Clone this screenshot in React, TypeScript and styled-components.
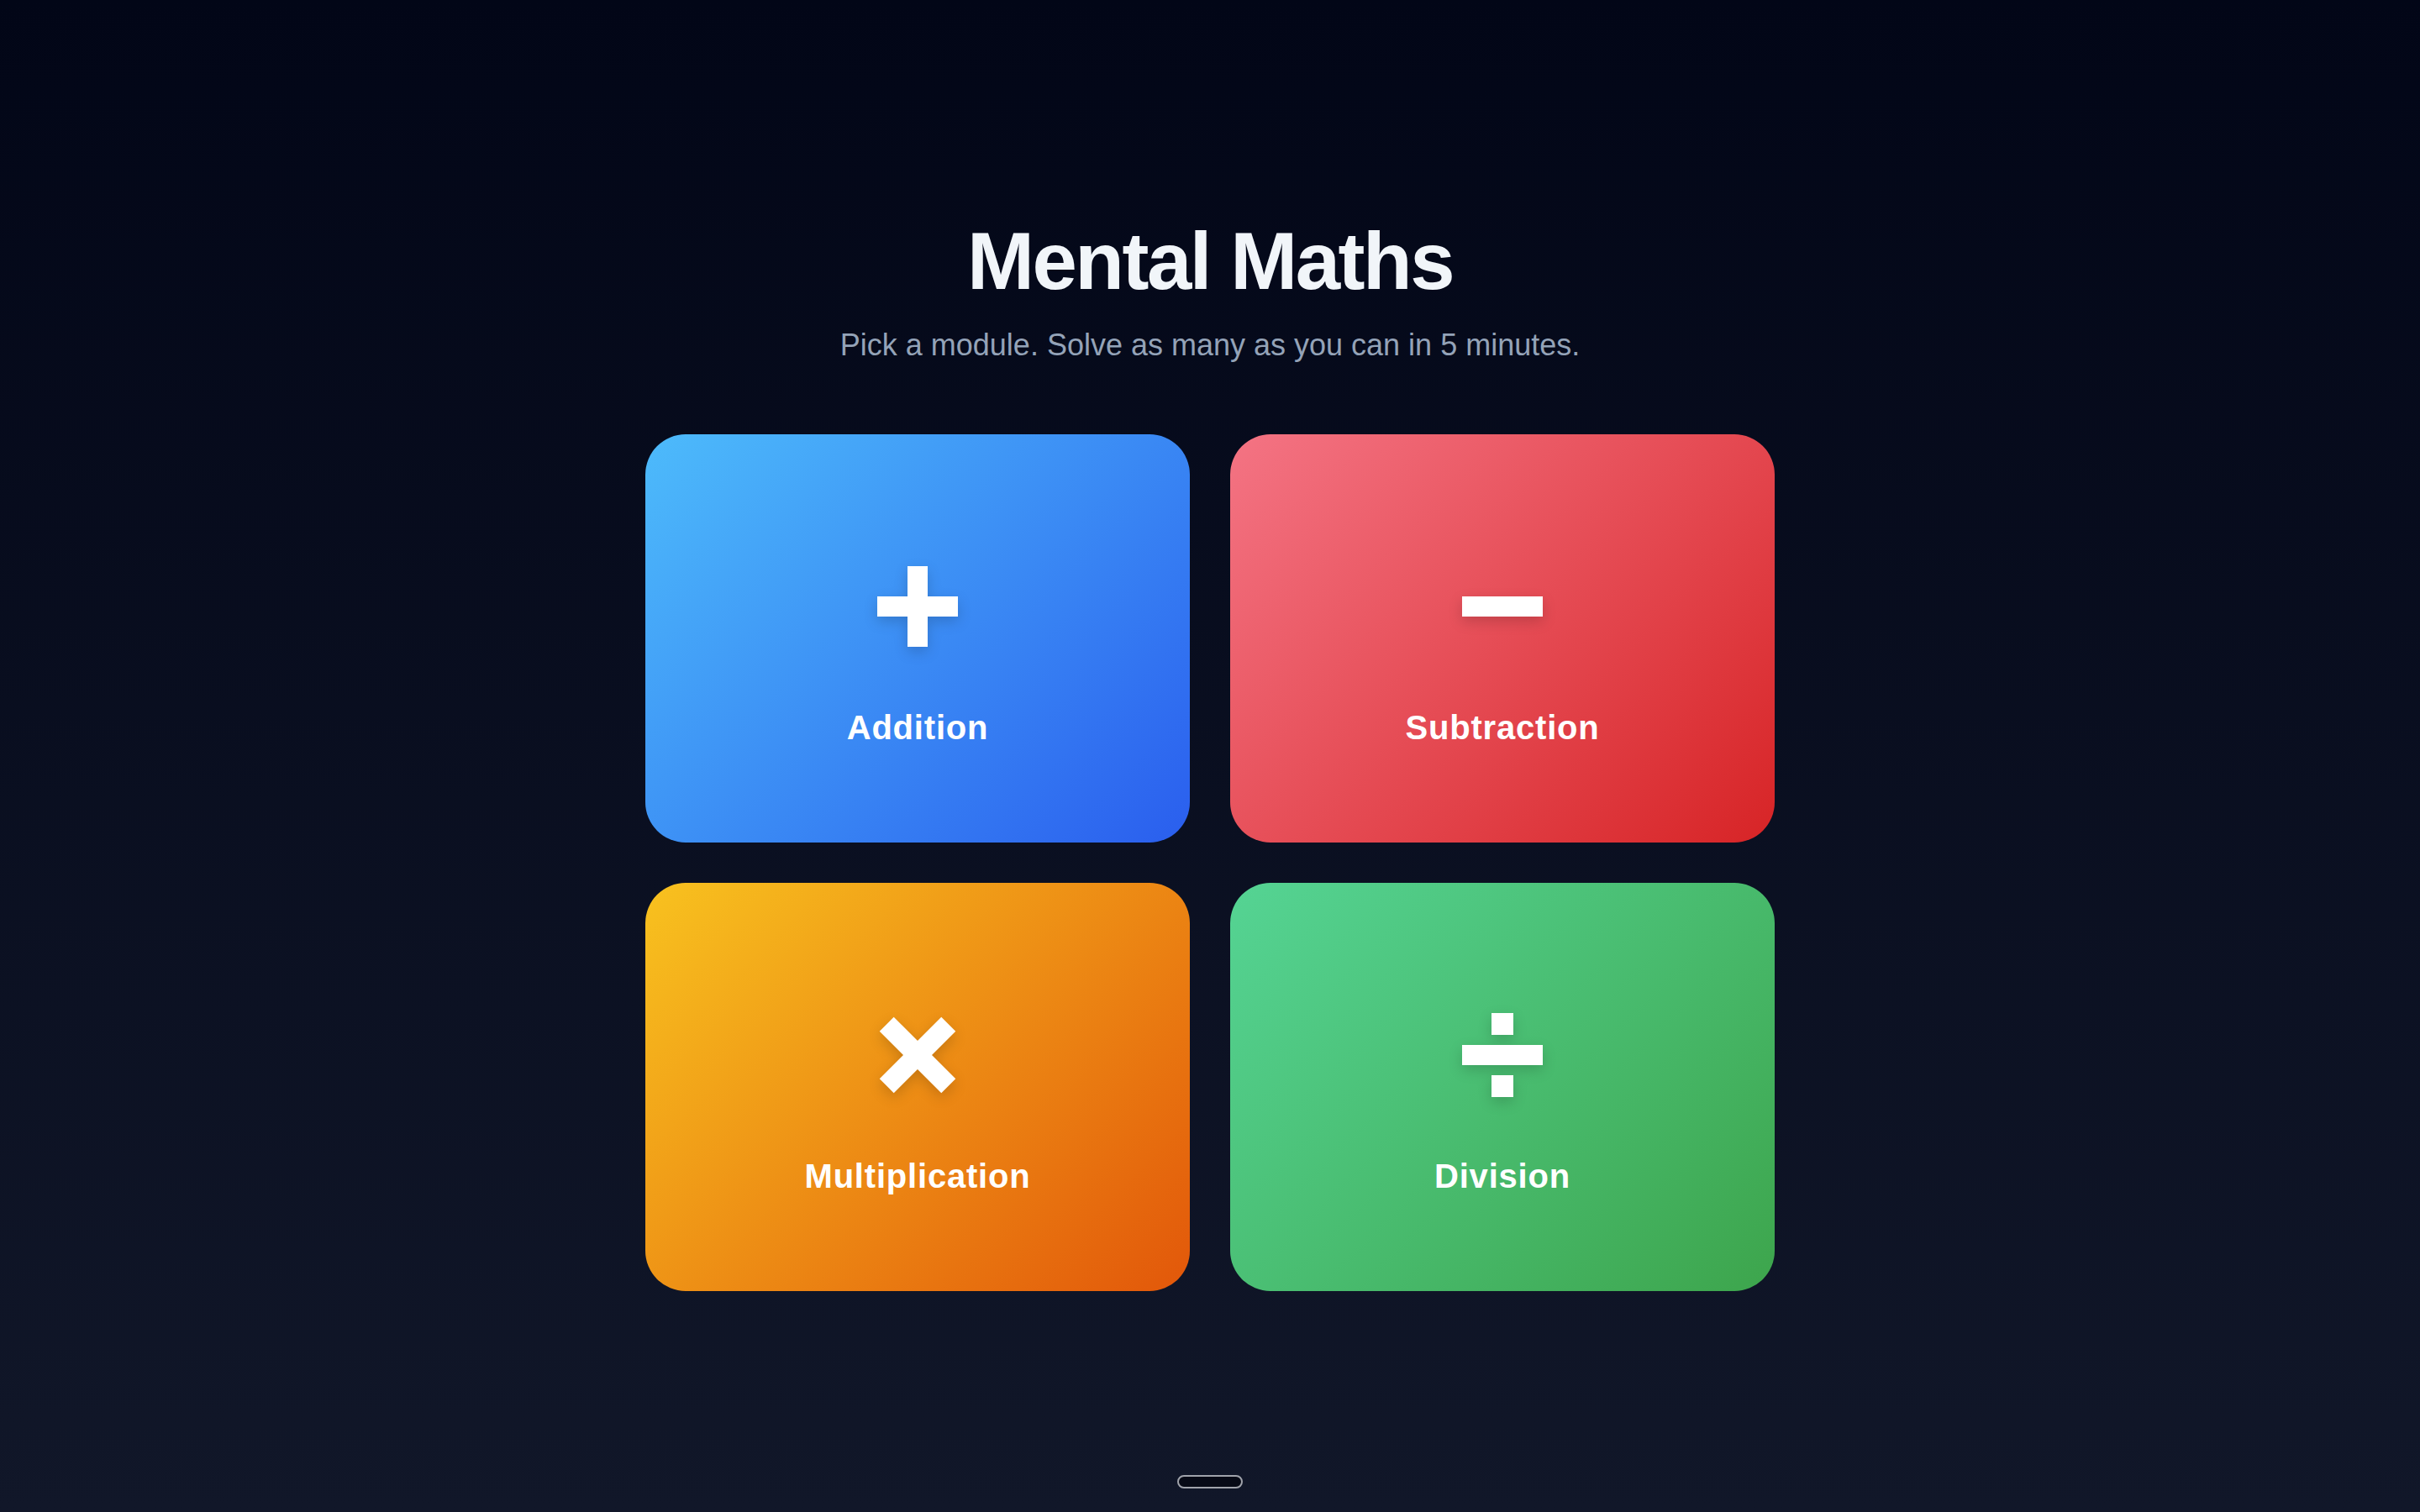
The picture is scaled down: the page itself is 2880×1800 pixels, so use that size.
import React, { FC } from 'react';
import styled, { createGlobalStyle } from 'styled-components';

const GlobalStyle = createGlobalStyle`
  html, body {
    margin: 0;
    padding: 0;
  }
  body {
    background: linear-gradient(180deg, #020617 0%, #111729 100%);
    min-height: 100vh;
    font-family: "Liberation Sans", Arial, Helvetica, sans-serif;
  }
`;

const Page = styled.main`
  min-height: 100vh;
  display: flex;
  flex-direction: column;
  align-items: center;
  justify-content: center;
`;

const Title = styled.h1`
  margin: 0;
  font-size: 96px;
  line-height: 1;
  font-weight: 700;
  letter-spacing: -2.5px;
  color: #f1f5f9;
`;

const Subtitle = styled.p`
  margin: 27px 0 81px 0;
  font-size: 36px;
  line-height: 1.4;
  color: #94a3b8;
`;

const Grid = styled.div`
  display: grid;
  grid-template-columns: repeat(2, 648px);
  grid-auto-rows: 486px;
  gap: 48px;
`;

const Card = styled.button<{ $from: string; $to: string }>`
  display: flex;
  flex-direction: column;
  align-items: center;
  justify-content: center;
  gap: 68px;
  padding: 40px 0 0 0;
  border: none;
  border-radius: 48px;
  background: linear-gradient(135deg, ${(p) => p.$from} 0%, ${(p) => p.$to} 100%);
  cursor: pointer;
  font-family: inherit;
`;

const Icon = styled.svg`
  width: 104px;
  height: 104px;
  overflow: visible;
  filter: drop-shadow(0 6px 8px rgba(0, 0, 0, 0.16));
`;

const Label = styled.span`
  font-size: 40px;
  line-height: 1.2;
  font-weight: 700;
  letter-spacing: 0.8px;
  color: #ffffff;
`;

const HomeBar = styled.div`
  position: fixed;
  left: 50%;
  bottom: 28px;
  transform: translateX(-50%);
  width: 78px;
  height: 16px;
  box-sizing: border-box;
  border: 2px solid #a0a3ab;
  border-radius: 999px;
  background: #070a16;
`;

type Op = 'add' | 'sub' | 'mul' | 'div';

const OpIcon: FC<{ op: Op }> = ({ op }) => (
  <Icon viewBox="0 0 104 104" fill="#ffffff">
    {op === 'add' && (
      <>
        <rect x="4" y="40" width="96" height="24" />
        <rect x="40" y="4" width="24" height="96" />
      </>
    )}
    {op === 'sub' && <rect x="4" y="40" width="96" height="24" />}
    {op === 'mul' && (
      <>
        <rect x="0" y="40" width="104" height="24" transform="rotate(45 52 52)" />
        <rect x="0" y="40" width="104" height="24" transform="rotate(-45 52 52)" />
      </>
    )}
    {op === 'div' && (
      <>
        <rect x="39" y="2" width="26" height="26" />
        <rect x="4" y="40" width="96" height="24" />
        <rect x="39" y="76" width="26" height="26" />
      </>
    )}
  </Icon>
);

const modules: { op: Op; name: string; from: string; to: string }[] = [
  { op: 'add', name: 'Addition', from: '#4dbbfb', to: '#2a5eee' },
  { op: 'sub', name: 'Subtraction', from: '#f47484', to: '#d72426' },
  { op: 'mul', name: 'Multiplication', from: '#f8c21f', to: '#e2570a' },
  { op: 'div', name: 'Division', from: '#55d494', to: '#3da54c' },
];

const App: FC = () => (
  <>
    <GlobalStyle />
    <Page>
      <Title>Mental Maths</Title>
      <Subtitle>Pick a module. Solve as many as you can in 5 minutes.</Subtitle>
      <Grid>
        {modules.map((m) => (
          <Card key={m.op} $from={m.from} $to={m.to}>
            <OpIcon op={m.op} />
            <Label>{m.name}</Label>
          </Card>
        ))}
      </Grid>
    </Page>
    <HomeBar />
  </>
);

export default App;
